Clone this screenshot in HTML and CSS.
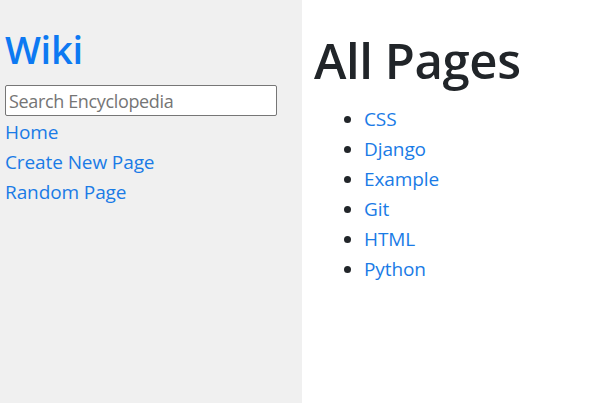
FILE: index.html
```html
<!DOCTYPE html>
<html lang="en">
<head>
<meta charset="utf-8">
<title>Encyclopedia</title>
<link rel="stylesheet" href="styles.css">
</head>
<body>
<div class="row">
  <div class="sidebar">
    <h2 class="brand">Wiki</h2>
    <form class="search-form">
      <input class="search" type="text" name="q" placeholder="Search Encyclopedia">
    </form>
    <div><a href="#">Home</a></div>
    <div><a href="#">Create New Page</a></div>
    <div><a href="#">Random Page</a></div>
  </div>
  <div class="main">
    <h1 class="title">All Pages</h1>
    <ul class="pages">
      <li><a href="#">CSS</a></li>
      <li><a href="#">Django</a></li>
      <li><a href="#">Example</a></li>
      <li><a href="#">Git</a></li>
      <li><a href="#">HTML</a></li>
      <li><a href="#">Python</a></li>
    </ul>
  </div>
</div>
</body>
</html>
```
FILE: styles.css
```css
html, body {
  margin: 0;
  padding: 0;
  background: #ffffff;
}
body {
  font-family: "Open Sans", "Noto Sans", sans-serif;
  font-size: 19px;
  line-height: 30px;
  letter-spacing: -0.1px;
  color: #212529;
}
a {
  color: #1a7be6;
  text-decoration: none;
}
.row {
  display: flex;
  height: 100vh;
}
.sidebar {
  width: 302px;
  box-sizing: border-box;
  background: #f0f0f0;
  padding: 25px 25px 0 5px;
}
.brand {
  margin: 0 0 12px 0;
  font-size: 38px;
  line-height: 48px;
  font-weight: 600;
  letter-spacing: -0.3px;
  color: #0d79f2;
}
.search-form {
  margin: 0 0 1px 0;
}
.search {
  display: block;
  width: 100%;
  height: 31px;
  box-sizing: border-box;
  margin: 0;
  padding: 0 3px;
  border: 1px solid #767676;
  border-radius: 2px;
  font-family: "Open Sans", "Noto Sans", sans-serif;
  font-size: 18px;
  letter-spacing: -0.35px;
  color: #212529;
  background: #ffffff;
}
.search::placeholder {
  color: #757575;
}
.main {
  flex: 1;
  padding: 0 12px;
}
.title {
  margin: 0 0 14px 0;
  padding-top: 30px;
  font-size: 49px;
  line-height: 60px;
  font-weight: 600;
  letter-spacing: -0.4px;
  color: #212529;
}
.pages {
  margin: 0;
  padding-left: 50px;
}
```
